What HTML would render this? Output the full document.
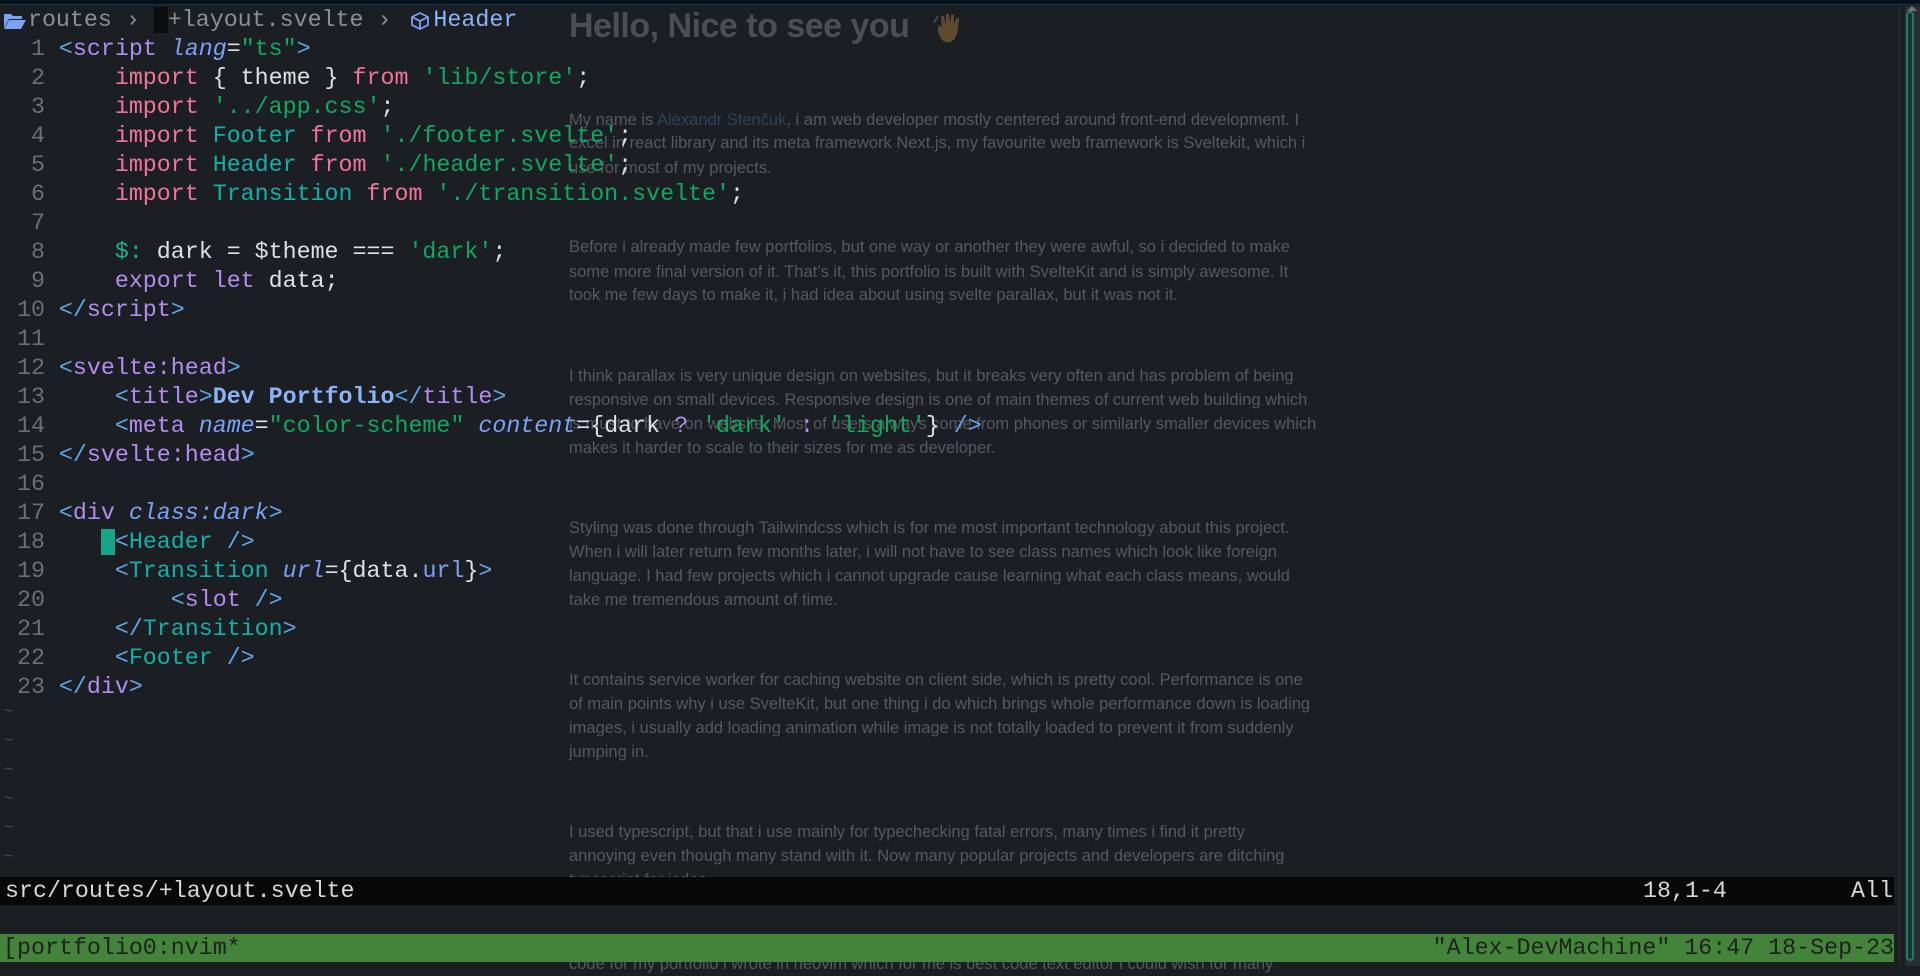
<!DOCTYPE html>
<html><head><meta charset="utf-8"><style>
*{margin:0;padding:0;box-sizing:border-box}
body{width:1920px;height:966px;background:#1b1e23;overflow:hidden;position:relative;font-family:"Liberation Mono",monospace}
.top{position:absolute;left:0;top:0;width:1920px;height:5px;background:#04111a;border-bottom:1px solid #0d3a4a}
.page{position:absolute;left:569px;top:0;width:800px;font-family:"Liberation Sans",sans-serif;color:#555960;font-size:16.5px}
.page h1{position:absolute;left:0;top:7px;font-size:34px;font-weight:bold;color:#4b4f55;white-space:nowrap;letter-spacing:-0.5px}
.pl{position:absolute;left:0;white-space:nowrap;line-height:24px;height:24px}
.c{position:absolute;left:3px;white-space:pre;font-size:23.3px;line-height:29px;height:29px;color:#e0e0e0}
.n{color:#6c6f75}
.b{color:#5fa8e8}.t{color:#b48cf0}.cp{color:#14b0a8}.k{color:#f07598}.s{color:#10a860}
.a{color:#7aa2f7;font-style:italic}.ti{color:#8ab4f8;font-weight:bold}.d{color:#20b090}
.tilde{position:absolute;left:4px;font-size:16px;color:#4a4d52}
.wb{position:absolute;top:6px;left:0;height:29px;line-height:29px;font-size:23.3px;color:#8a8f98;white-space:pre}
.status{position:absolute;left:0;top:877px;width:1894px;height:28px;background:#080808;color:#d8d8d8;font-size:23.3px;line-height:28px;white-space:pre;padding-left:5px}
.tmux{position:absolute;left:0;top:934px;width:1894px;height:28px;background:#44843a;color:#1c221c;font-size:23.3px;line-height:28px;white-space:pre;padding-left:3px}
.sb{position:absolute;left:1905px;top:6px;width:15px;height:960px;background:#2a2d31}
.div{position:absolute;left:1899px;top:6px;width:1px;height:960px;background:#2c3136}
.thumb{position:absolute;left:1906px;top:11px;width:8px;height:950px;border:2px solid #17806a;border-radius:5px;background:#22302e}
</style></head><body>
<div class="top"></div>
<div class="page">
<h1>Hello, Nice to see you</h1>
<svg style="position:absolute;left:364px;top:11px" width="36" height="36" viewBox="0 0 36 36"><path d="M10 30 C5 25 4 18 6 14 L9 16 L8 6 C8 4 11 4 11 6 L13 14 L13 4 C13 2 16 2 16 4 L17 13 L18 5 C18 3 21 3 21 5 L21 14 L23 8 C24 6 27 7 26 9 L24 22 C23 29 16 34 10 30Z" fill="#5e4a2e"/><path d="M3 8 L1 12 M5 5 L3 9" stroke="#4b4f55" stroke-width="1.5"/></svg>
<div class="pl" style="top:108px">My name is <span style="color:#2f4060">Alexandr Stenčuk</span>, i am web developer mostly centered around front-end development. I</div>
<div class="pl" style="top:131px">excel in react library and its meta framework Next.js, my favourite web framework is Sveltekit, which i</div>
<div class="pl" style="top:156px">use for most of my projects.</div>
<div class="pl" style="top:235px">Before i already made few portfolios, but one way or another they were awful, so i decided to make</div>
<div class="pl" style="top:260px">some more final version of it. That’s it, this portfolio is built with SvelteKit and is simply awesome. It</div>
<div class="pl" style="top:283px">took me few days to make it, i had idea about using svelte parallax, but it was not it.</div>
<div class="pl" style="top:364px">I think parallax is very unique design on websites, but it breaks very often and has problem of being</div>
<div class="pl" style="top:388px">responsive on small devices. Responsive design is one of main themes of current web building which</div>
<div class="pl" style="top:412px">is must to have on website. Most of users always come from phones or similarly smaller devices which</div>
<div class="pl" style="top:436px">makes it harder to scale to their sizes for me as developer.</div>
<div class="pl" style="top:516px">Styling was done through Tailwindcss which is for me most important technology about this project.</div>
<div class="pl" style="top:540px">When i will later return few months later, i will not have to see class names which look like foreign</div>
<div class="pl" style="top:564px">language. I had few projects which i cannot upgrade cause learning what each class means, would</div>
<div class="pl" style="top:588px">take me tremendous amount of time.</div>
<div class="pl" style="top:668px">It contains service worker for caching website on client side, which is pretty cool. Performance is one</div>
<div class="pl" style="top:692px">of main points why i use SvelteKit, but one thing i do which brings whole performance down is loading</div>
<div class="pl" style="top:716px">images, i usually add loading animation while image is not totally loaded to prevent it from suddenly</div>
<div class="pl" style="top:740px">jumping in.</div>
<div class="pl" style="top:820px">I used typescript, but that i use mainly for typechecking fatal errors, many times i find it pretty</div>
<div class="pl" style="top:844px">annoying even though many stand with it. Now many popular projects and developers are ditching</div>
<div class="pl" style="top:868px">typescript for jsdoc.</div>
<div class="pl" style="top:952px">code for my portfolio i wrote in neovim which for me is best code text editor i could wish for many</div>
</div>

<div class="wb"><svg style="position:absolute;left:3px;top:6px" width="24" height="18" viewBox="0 0 24 18"><path d="M1 2 h7 l2 2 h9 v3 H6 L1 16Z" fill="#7aa2f7"/><path d="M6 8 H23 L18 17 H1Z" fill="#7aa2f7"/></svg>  routes › <span style="background:#0b0c0e"> </span>+layout.svelte ›   <span style="color:#8ab4f8">Header</span><svg style="position:absolute;left:410px;top:5px" width="20" height="20" viewBox="0 0 20 20" fill="none" stroke="#7aa2f7" stroke-width="1.8"><path d="M10 2 L18 6 V14 L10 18 L2 14 V6Z M2 6 L10 10 L18 6 M10 10 V18"/></svg></div>

<div class="c" style="top:34.5px"><span class="n">  1 </span><span class="b">&lt;</span><span class="t">script</span> <span class="a">lang</span>=<span class="s">"ts"</span><span class="b">&gt;</span></div>
<div class="c" style="top:63.5px"><span class="n">  2 </span>    <span class="k">import</span> { theme } <span class="k">from</span> <span class="s">'lib/store'</span>;</div>
<div class="c" style="top:92.5px"><span class="n">  3 </span>    <span class="k">import</span> <span class="s">'../app.css'</span>;</div>
<div class="c" style="top:121.5px"><span class="n">  4 </span>    <span class="k">import</span> <span class="cp">Footer</span> <span class="k">from</span> <span class="s">'./footer.svelte'</span>;</div>
<div class="c" style="top:150.5px"><span class="n">  5 </span>    <span class="k">import</span> <span class="cp">Header</span> <span class="k">from</span> <span class="s">'./header.svelte'</span>;</div>
<div class="c" style="top:179.5px"><span class="n">  6 </span>    <span class="k">import</span> <span class="cp">Transition</span> <span class="k">from</span> <span class="s">'./transition.svelte'</span>;</div>
<div class="c" style="top:208.5px"><span class="n">  7 </span></div>
<div class="c" style="top:237.5px"><span class="n">  8 </span>    <span class="d">$:</span> dark = $theme === <span class="s">'dark'</span>;</div>
<div class="c" style="top:266.5px"><span class="n">  9 </span>    <span class="t">export</span> <span class="t">let</span> data;</div>
<div class="c" style="top:295.5px"><span class="n"> 10 </span><span class="b">&lt;/</span><span class="t">script</span><span class="b">&gt;</span></div>
<div class="c" style="top:324.5px"><span class="n"> 11 </span></div>
<div class="c" style="top:353.5px"><span class="n"> 12 </span><span class="b">&lt;</span><span class="t">svelte:head</span><span class="b">&gt;</span></div>
<div class="c" style="top:382.5px"><span class="n"> 13 </span>    <span class="b">&lt;</span><span class="t">title</span><span class="b">&gt;</span><span class="ti">Dev Portfolio</span><span class="b">&lt;/</span><span class="t">title</span><span class="b">&gt;</span></div>
<div class="c" style="top:411.5px"><span class="n"> 14 </span>    <span class="b">&lt;</span><span class="t">meta</span> <span class="a">name</span>=<span class="s">"color-scheme"</span> <span class="a">content</span>={dark <span class="t">?</span> <span class="s">'dark'</span> <span class="t">:</span> <span class="s">'light'</span>} <span class="b">/&gt;</span></div>
<div class="c" style="top:440.5px"><span class="n"> 15 </span><span class="b">&lt;/</span><span class="t">svelte:head</span><span class="b">&gt;</span></div>
<div class="c" style="top:469.5px"><span class="n"> 16 </span></div>
<div class="c" style="top:498.5px"><span class="n"> 17 </span><span class="b">&lt;</span><span class="t">div</span> <span class="a">class:dark</span><span class="b">&gt;</span></div>
<div class="c" style="top:527.5px"><span class="n"> 18 </span>   <span style="background:#17a589;color:#17a589"> </span><span class="b">&lt;</span><span class="cp">Header</span> <span class="b">/&gt;</span></div>
<div class="c" style="top:556.5px"><span class="n"> 19 </span>    <span class="b">&lt;</span><span class="cp">Transition</span> <span class="a">url</span>={data.<span style="color:#7aa2f7">url</span>}<span class="b">&gt;</span></div>
<div class="c" style="top:585.5px"><span class="n"> 20 </span>        <span class="b">&lt;</span><span class="t">slot</span> <span class="b">/&gt;</span></div>
<div class="c" style="top:614.5px"><span class="n"> 21 </span>    <span class="b">&lt;/</span><span class="cp">Transition</span><span class="b">&gt;</span></div>
<div class="c" style="top:643.5px"><span class="n"> 22 </span>    <span class="b">&lt;</span><span class="cp">Footer</span> <span class="b">/&gt;</span></div>
<div class="c" style="top:672.5px"><span class="n"> 23 </span><span class="b">&lt;/</span><span class="t">div</span><span class="b">&gt;</span></div>
<div class="tilde" style="top:703px">~</div>
<div class="tilde" style="top:732px">~</div>
<div class="tilde" style="top:761px">~</div>
<div class="tilde" style="top:790px">~</div>
<div class="tilde" style="top:819px">~</div>
<div class="tilde" style="top:848px">~</div>

<div class="status">src/routes/+layout.svelte<span style="position:absolute;left:1643px">18,1-4</span><span style="position:absolute;left:1851px">All</span></div>
<div class="tmux">[portfolio0:nvim*<span style="position:absolute;right:0">"Alex-DevMachine" 16:47 18-Sep-23</span></div>
<div class="div"></div>
<div class="sb"></div>
<div class="thumb"></div>
<div style="position:absolute;left:1907px;top:6px;width:0;height:0;border-left:5px solid transparent;border-right:5px solid transparent;border-bottom:5px solid #777"></div>
</body></html>
